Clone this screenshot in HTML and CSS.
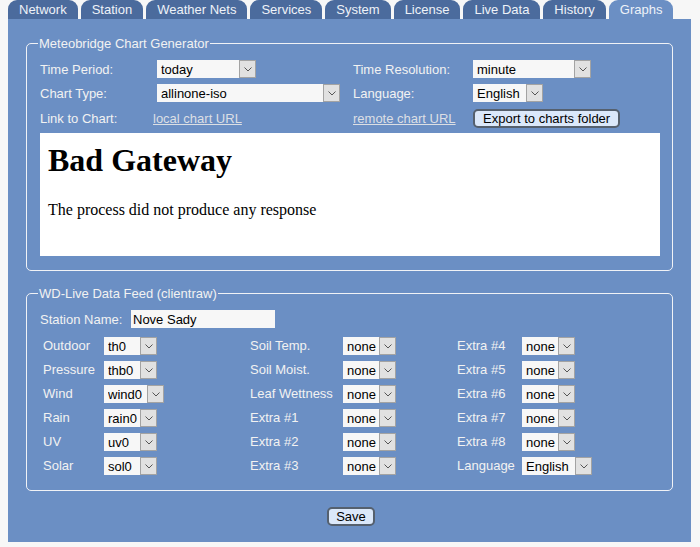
FILE: index.html
```html
<!DOCTYPE html>
<html lang="en">
<head>
<meta charset="utf-8">
<title>Meteobridge - Graphs</title>
<link rel="stylesheet" href="styles.css">
</head>
<body>
<div class="page">
  <nav class="tabs">
    <a class="tab">Network</a>
    <a class="tab">Station</a>
    <a class="tab">Weather Nets</a>
    <a class="tab">Services</a>
    <a class="tab">System</a>
    <a class="tab">License</a>
    <a class="tab">Live Data</a>
    <a class="tab">History</a>
    <a class="tab active">Graphs</a>
  </nav>
  <div class="panel">
    <fieldset class="box">
      <legend>Meteobridge Chart Generator</legend>
      <div class="chart-grid">
        <label class="lbl">Time Period:</label>
        <span class="sel"><select class="w82"><option>today</option><option>yesterday</option><option>week</option><option>month</option></select><span class="arr"><svg width="8" height="5" viewBox="0 0 8 5"><polyline points="0.5,0.5 4,4 7.5,0.5" fill="none" stroke="#555" stroke-width="1"/></svg></span></span>
        <label class="lbl">Time Resolution:</label>
        <span class="sel"><select class="w101"><option>minute</option><option>hour</option><option>day</option></select><span class="arr"><svg width="8" height="5" viewBox="0 0 8 5"><polyline points="0.5,0.5 4,4 7.5,0.5" fill="none" stroke="#555" stroke-width="1"/></svg></span></span>

        <label class="lbl">Chart Type:</label>
        <span class="sel"><select class="w166"><option>allinone-iso</option><option>temperature</option><option>wind</option></select><span class="arr"><svg width="8" height="5" viewBox="0 0 8 5"><polyline points="0.5,0.5 4,4 7.5,0.5" fill="none" stroke="#555" stroke-width="1"/></svg></span></span>
        <label class="lbl">Language:</label>
        <span class="sel"><select class="w53"><option>English</option><option>Deutsch</option></select><span class="arr"><svg width="8" height="5" viewBox="0 0 8 5"><polyline points="0.5,0.5 4,4 7.5,0.5" fill="none" stroke="#555" stroke-width="1"/></svg></span></span>

        <span class="lbl">Link to Chart:</span>
        <a class="link link-local" href="#">local chart URL</a>
        <a class="link" href="#">remote chart URL</a>
        <span><button class="btn" type="button">Export to charts folder</button></span>
      </div>
      <div class="frame">
        <h1>Bad Gateway</h1>
        <p>The process did not produce any response</p>
      </div>
    </fieldset>

    <fieldset class="box box-feed">
      <legend>WD-Live Data Feed (clientraw)</legend>
      <div class="station-row">
        <label class="lbl station-lbl">Station Name:</label>
        <input class="text-input" type="text" value="Nove Sady">
      </div>
      <div class="feed-grid">
        <span class="lbl">Outdoor</span>
        <span class="sel"><select class="w36"><option>th0</option></select><span class="arr"><svg width="8" height="5" viewBox="0 0 8 5"><polyline points="0.5,0.5 4,4 7.5,0.5" fill="none" stroke="#555" stroke-width="1"/></svg></span></span>
        <span class="lbl">Soil Temp.</span>
        <span class="sel"><select class="w36"><option>none</option></select><span class="arr"><svg width="8" height="5" viewBox="0 0 8 5"><polyline points="0.5,0.5 4,4 7.5,0.5" fill="none" stroke="#555" stroke-width="1"/></svg></span></span>
        <span class="lbl">Extra #4</span>
        <span class="sel"><select class="w36"><option>none</option></select><span class="arr"><svg width="8" height="5" viewBox="0 0 8 5"><polyline points="0.5,0.5 4,4 7.5,0.5" fill="none" stroke="#555" stroke-width="1"/></svg></span></span>

        <span class="lbl">Pressure</span>
        <span class="sel"><select class="w36"><option>thb0</option></select><span class="arr"><svg width="8" height="5" viewBox="0 0 8 5"><polyline points="0.5,0.5 4,4 7.5,0.5" fill="none" stroke="#555" stroke-width="1"/></svg></span></span>
        <span class="lbl">Soil Moist.</span>
        <span class="sel"><select class="w36"><option>none</option></select><span class="arr"><svg width="8" height="5" viewBox="0 0 8 5"><polyline points="0.5,0.5 4,4 7.5,0.5" fill="none" stroke="#555" stroke-width="1"/></svg></span></span>
        <span class="lbl">Extra #5</span>
        <span class="sel"><select class="w36"><option>none</option></select><span class="arr"><svg width="8" height="5" viewBox="0 0 8 5"><polyline points="0.5,0.5 4,4 7.5,0.5" fill="none" stroke="#555" stroke-width="1"/></svg></span></span>

        <span class="lbl">Wind</span>
        <span class="sel"><select class="w43"><option>wind0</option></select><span class="arr"><svg width="8" height="5" viewBox="0 0 8 5"><polyline points="0.5,0.5 4,4 7.5,0.5" fill="none" stroke="#555" stroke-width="1"/></svg></span></span>
        <span class="lbl">Leaf Wettness</span>
        <span class="sel"><select class="w36"><option>none</option></select><span class="arr"><svg width="8" height="5" viewBox="0 0 8 5"><polyline points="0.5,0.5 4,4 7.5,0.5" fill="none" stroke="#555" stroke-width="1"/></svg></span></span>
        <span class="lbl">Extra #6</span>
        <span class="sel"><select class="w36"><option>none</option></select><span class="arr"><svg width="8" height="5" viewBox="0 0 8 5"><polyline points="0.5,0.5 4,4 7.5,0.5" fill="none" stroke="#555" stroke-width="1"/></svg></span></span>

        <span class="lbl">Rain</span>
        <span class="sel"><select class="w36"><option>rain0</option></select><span class="arr"><svg width="8" height="5" viewBox="0 0 8 5"><polyline points="0.5,0.5 4,4 7.5,0.5" fill="none" stroke="#555" stroke-width="1"/></svg></span></span>
        <span class="lbl">Extra #1</span>
        <span class="sel"><select class="w36"><option>none</option></select><span class="arr"><svg width="8" height="5" viewBox="0 0 8 5"><polyline points="0.5,0.5 4,4 7.5,0.5" fill="none" stroke="#555" stroke-width="1"/></svg></span></span>
        <span class="lbl">Extra #7</span>
        <span class="sel"><select class="w36"><option>none</option></select><span class="arr"><svg width="8" height="5" viewBox="0 0 8 5"><polyline points="0.5,0.5 4,4 7.5,0.5" fill="none" stroke="#555" stroke-width="1"/></svg></span></span>

        <span class="lbl">UV</span>
        <span class="sel"><select class="w36"><option>uv0</option></select><span class="arr"><svg width="8" height="5" viewBox="0 0 8 5"><polyline points="0.5,0.5 4,4 7.5,0.5" fill="none" stroke="#555" stroke-width="1"/></svg></span></span>
        <span class="lbl">Extra #2</span>
        <span class="sel"><select class="w36"><option>none</option></select><span class="arr"><svg width="8" height="5" viewBox="0 0 8 5"><polyline points="0.5,0.5 4,4 7.5,0.5" fill="none" stroke="#555" stroke-width="1"/></svg></span></span>
        <span class="lbl">Extra #8</span>
        <span class="sel"><select class="w36"><option>none</option></select><span class="arr"><svg width="8" height="5" viewBox="0 0 8 5"><polyline points="0.5,0.5 4,4 7.5,0.5" fill="none" stroke="#555" stroke-width="1"/></svg></span></span>

        <span class="lbl">Solar</span>
        <span class="sel"><select class="w36"><option>sol0</option></select><span class="arr"><svg width="8" height="5" viewBox="0 0 8 5"><polyline points="0.5,0.5 4,4 7.5,0.5" fill="none" stroke="#555" stroke-width="1"/></svg></span></span>
        <span class="lbl">Extra #3</span>
        <span class="sel"><select class="w36"><option>none</option></select><span class="arr"><svg width="8" height="5" viewBox="0 0 8 5"><polyline points="0.5,0.5 4,4 7.5,0.5" fill="none" stroke="#555" stroke-width="1"/></svg></span></span>
        <span class="lbl">Language</span>
        <span class="sel"><select class="w53"><option>English</option></select><span class="arr"><svg width="8" height="5" viewBox="0 0 8 5"><polyline points="0.5,0.5 4,4 7.5,0.5" fill="none" stroke="#555" stroke-width="1"/></svg></span></span>
      </div>
    </fieldset>

    <div class="actions">
      <button class="btn btn-save" type="button">Save</button>
    </div>
  </div>
</div>
</body>
</html>
```
FILE: styles.css
```css
html, body {
  margin: 0;
  padding: 0;
  background: #f7f7f7;
}
body {
  padding-left: 8px;
  font-family: "Liberation Sans", Arial, sans-serif;
  font-size: 13px;
  color: #f2f2f2;
}
.page {
  width: 683px;
}
.tabs {
  display: flex;
  gap: 3px;
  height: 19px;
}
.tab {
  display: block;
  height: 19px;
  line-height: 19px;
  padding: 0 11px;
  background: #4b6b9d;
  color: #eef2f8;
  border-radius: 9px 9px 0 0;
  white-space: nowrap;
  cursor: pointer;
}
.tab.active {
  background: #6b8fc4;
}
.panel {
  background: #6b8fc4;
  padding: 17px 18px 16px 18px;
}
.box {
  margin: 0;
  border: 1px solid #f0f2f6;
  border-radius: 5px;
  padding: 6px 12px 14px 13px;
  min-width: 0;
}
.box-feed {
  margin-top: 15px;
  padding-bottom: 12px;
}
.box legend {
  line-height: 15px;
  padding: 0 1px;
  margin-left: -2px;
  color: #f2f2f2;
}
.lbl {
  color: #f2f2f2;
  white-space: nowrap;
}
.chart-grid {
  display: grid;
  grid-template-columns: 117px 196px 120px auto;
  grid-template-rows: 24px 24px 26px;
  align-items: center;
}
.link {
  color: #dcdfe4;
  text-decoration: underline;
  justify-self: start;
}
.link-local {
  margin-left: -4px;
}
.sel {
  display: inline-flex;
  height: 18px;
  vertical-align: middle;
}
.sel select {
  appearance: none;
  -webkit-appearance: none;
  border: 0;
  border-radius: 0;
  margin: 0;
  height: 18px;
  padding: 0 0 0 4px;
  box-sizing: border-box;
  background: #f7f7f7;
  color: #000;
  font-family: "Liberation Sans", Arial, sans-serif;
  font-size: 13px;
  outline: none;
}
.sel .arr {
  width: 17px;
  height: 18px;
  box-sizing: border-box;
  border: 1px solid #a3a3a3;
  background: #e1e1e1;
  display: flex;
  align-items: center;
  justify-content: center;
}
.w36 { width: 36px; }
.w43 { width: 43px; }
.w53 { width: 53px; }
.w82 { width: 82px; }
.w101 { width: 101px; }
.w166 { width: 166px; }
.btn {
  height: 19px;
  padding: 0 8px;
  margin: 0;
  border: 2px solid #55606e;
  border-radius: 5px;
  background: #dbe8fa;
  color: #000;
  font-family: "Liberation Sans", Arial, sans-serif;
  font-size: 13px;
  line-height: 15px;
  cursor: pointer;
}
.frame {
  margin-top: 2px;
  height: 123px;
  box-sizing: border-box;
  background: #fff;
  padding: 9px 8px 8px 8px;
  color: #000;
  font-family: "Liberation Serif", "Times New Roman", serif;
}
.frame h1 {
  margin: 0 0 22px 0;
  font-size: 32px;
  font-weight: bold;
}
.frame p {
  margin: 0;
  font-size: 16px;
}
.station-row {
  display: flex;
  align-items: center;
  height: 24px;
}
.station-lbl {
  width: 91px;
}
.text-input {
  width: 144px;
  height: 18px;
  box-sizing: border-box;
  border: 0;
  margin: 0;
  padding: 0 2px;
  background: #f7f7f7;
  color: #000;
  font-family: "Liberation Sans", Arial, sans-serif;
  font-size: 13px;
  outline: none;
}
.feed-grid {
  margin: 3px 0 0 3px;
  display: grid;
  grid-template-columns: 61px 146px 93px 114px 65px auto;
  grid-auto-rows: 24px;
  align-items: center;
}
.feed-grid .lbl {
  margin-top: -1px;
}
.actions {
  display: flex;
  justify-content: center;
  margin-top: 16px;
}
.btn-save {
  padding: 0 7px;
  margin-left: 3px;
}
```
